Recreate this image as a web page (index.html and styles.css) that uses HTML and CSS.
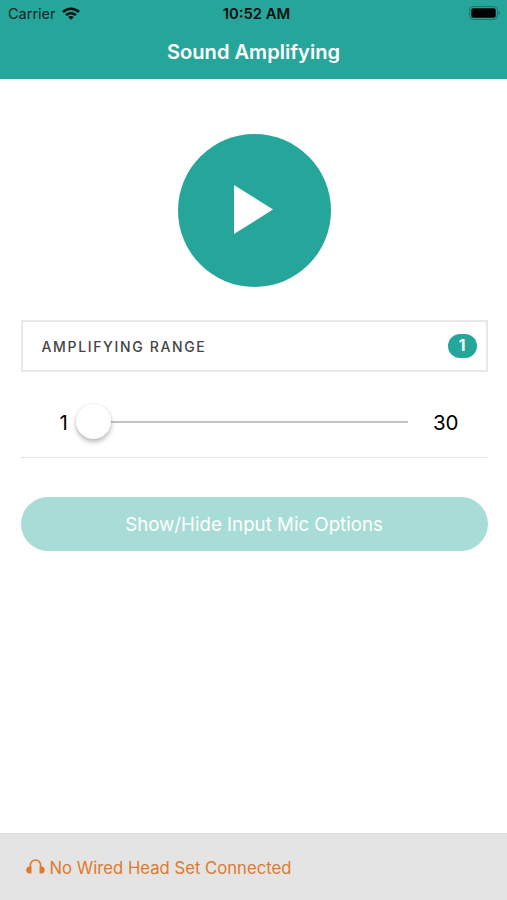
FILE: index.html
```html
<!DOCTYPE html>
<html lang="en">
<head>
<meta charset="utf-8">
<title>Sound Amplifying</title>
<link rel="stylesheet" href="styles.css">
</head>
<body>
<header class="header">
  <div class="status">
    <div class="carrier"><span>Carrier</span>
      <svg class="wifi" width="18" height="13" viewBox="0 0 18 13"><g fill="none" stroke="#03100f" stroke-width="2.5"><path d="M1 5C5.500.5 12.500.5 17 5"/><path d="M4 8.200c2.800-2.700 7.200-2.700 10 0"/></g><path d="M9 12.800 6.200 10c1.500-1.400 4.100-1.400 5.600 0z" fill="#03100f"/></svg>
    </div>
    <time class="clock">10:52 AM</time>
    <svg class="battery" width="32" height="14" viewBox="0 0 32 14"><rect x=".6" y=".6" width="27.800" height="12.800" rx="3.500" fill="none" stroke="#17756b"/><rect x="2.300" y="2.300" width="24.400" height="9.400" rx="1.700" fill="#000"/><path d="M29.700 4.700q2.400 2.300 0 4.600z" fill="#17685f"/></svg>
  </div>
  <h1 class="title">Sound Amplifying</h1>
</header>
<main class="content">
  <button class="play" aria-label="Play"><svg width="39" height="49" viewBox="0 0 39 49"><path d="M0 0 39 24.500 0 49z" fill="#fff"/></svg></button>
  <section class="range-head"><h2 class="label">AMPLIFYING RANGE</h2><span class="badge">1</span></section>
  <section class="range"><span class="min">1</span><div class="track"><span class="knob"></span></div><span class="max">30</span></section>
  <button class="options"><span>Show/Hide Input Mic Options</span></button>
</main>
<footer class="footer">
  <svg class="phones" width="19" height="16" viewBox="0 0 19 16"><path d="M4.300 9V6.500a5.200 5.500 0 0 1 10.400 0V9" fill="none" stroke="#e07a2c" stroke-width="1.700"/><path d="M5.500 7.500v7H3.700C-1 14.500-1 7.500 3.700 7.500zM13.500 7.500v7h1.800c4.700 0 4.700-7 0-7z" fill="#e07a2c"/></svg>
  <span class="message">No Wired Head Set Connected</span>
</footer>
</body>
</html>
```
FILE: styles.css
```css
* { box-sizing: border-box; }
body { margin: 0; height: 900px; display: flex; flex-direction: column; background: #fff; color: #000; font-family: Inter, "Liberation Sans", sans-serif; overflow: hidden; }
button { border: 0; padding: 0; font: inherit; }
svg { display: block; flex: none; }
.header { height: 79px; background: #26a69a; }
.status { height: 27px; display: grid; grid-template-columns: 1fr auto 1fr; align-items: center; padding: 0 6px 0 8px; font-size: 14.5px; }
.carrier { display: flex; align-items: center; gap: 6px; color: #062925; }
.clock { font-weight: 600; font-size: 14.8px; color: #03100f; margin-left: 4px; }
.battery { justify-self: end; margin-top: -1px; }
.title { margin: 0; height: 50px; line-height: 50px; text-align: center; font-size: 20.1px; font-weight: 600; color: #fff; }
.content { flex: 1; display: flex; flex-direction: column; padding: 54.5px 19.5px 0 20.5px; }
.play { width: 153px; height: 153px; flex: none; margin-left: 157px; border-radius: 50%; background: #26a69a; display: flex; align-items: center; justify-content: center; padding: 0 1px 1px 0; }
.range-head { height: 52px; margin-top: 33.5px; border: 2px solid #e8e8e8; display: flex; align-items: center; justify-content: space-between; padding: 0 9px 0 19px; }
.label { margin: 0; font-size: 14px; font-weight: 500; letter-spacing: 1.65px; color: #444; }
.badge { width: 29px; height: 24px; border-radius: 12px; background: #26a69a; color: #fff; font-size: 15.5px; font-weight: 700; line-height: 24px; text-align: center; }
.range { height: 86px; border-bottom: 1px solid #e2e2e2; display: flex; align-items: center; padding: 15px 29px 0 39px; font-size: 20.5px; }
.min { width: 18px; }
.track { flex: 1; height: 1.5px; background: #c2c2c2; position: relative; margin-right: 25px; }
.knob { position: absolute; left: -2px; top: -17px; width: 35px; height: 35px; border-radius: 50%; background: #fff; box-shadow: 0 3px 5px #0004, 0 0 3px #0001; }
.options { height: 54px; margin-top: 39px; border-radius: 27px; background: #a8dcd6; color: #fff; font-size: 18.7px; }
.footer { height: 67px; background: #e4e4e4; border-top: 1px solid #ddd; display: flex; align-items: center; gap: 4.5px; padding: 2px 0 0 26px; color: #e07a2c; font-size: 16.7px; }
.phones { margin-top: -2px; }
```
